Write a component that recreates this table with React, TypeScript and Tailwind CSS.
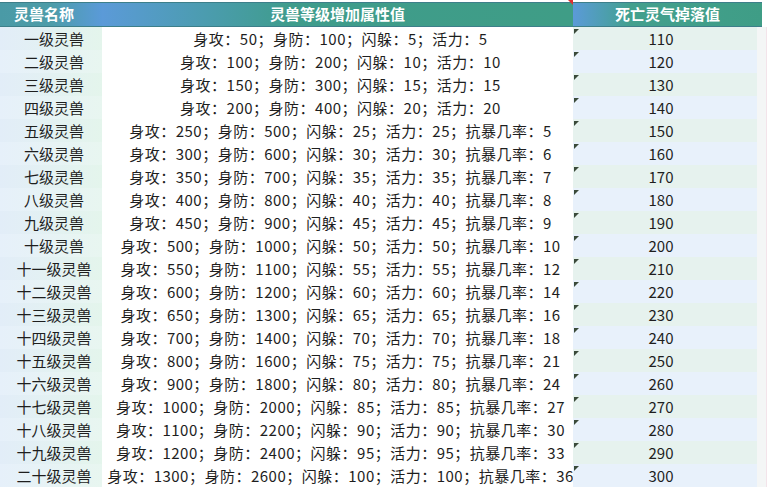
const rows = [
  ['一级灵兽', '身攻：50；身防：100；闪躲：5；活力：5', '110'],
  ['二级灵兽', '身攻：100；身防：200；闪躲：10；活力：10', '120'],
  ['三级灵兽', '身攻：150；身防：300；闪躲：15；活力：15', '130'],
  ['四级灵兽', '身攻：200；身防：400；闪躲：20；活力：20', '140'],
  ['五级灵兽', '身攻：250；身防：500；闪躲：25；活力：25；抗暴几率：5', '150'],
  ['六级灵兽', '身攻：300；身防：600；闪躲：30；活力：30；抗暴几率：6', '160'],
  ['七级灵兽', '身攻：350；身防：700；闪躲：35；活力：35；抗暴几率：7', '170'],
  ['八级灵兽', '身攻：400；身防：800；闪躲：40；活力：40；抗暴几率：8', '180'],
  ['九级灵兽', '身攻：450；身防：900；闪躲：45；活力：45；抗暴几率：9', '190'],
  ['十级灵兽', '身攻：500；身防：1000；闪躲：50；活力：50；抗暴几率：10', '200'],
  ['十一级灵兽', '身攻：550；身防：1100；闪躲：55；活力：55；抗暴几率：12', '210'],
  ['十二级灵兽', '身攻：600；身防：1200；闪躲：60；活力：60；抗暴几率：14', '220'],
  ['十三级灵兽', '身攻：650；身防：1300；闪躲：65；活力：65；抗暴几率：16', '230'],
  ['十四级灵兽', '身攻：700；身防：1400；闪躲：70；活力：70；抗暴几率：18', '240'],
  ['十五级灵兽', '身攻：800；身防：1600；闪躲：75；活力：75；抗暴几率：21', '250'],
  ['十六级灵兽', '身攻：900；身防：1800；闪躲：80；活力：80；抗暴几率：24', '260'],
  ['十七级灵兽', '身攻：1000；身防：2000；闪躲：85；活力：85；抗暴几率：27', '270'],
  ['十八级灵兽', '身攻：1100；身防：2200；闪躲：90；活力：90；抗暴几率：30', '280'],
  ['十九级灵兽', '身攻：1200；身防：2400；闪躲：95；活力：95；抗暴几率：33', '290'],
  ['二十级灵兽', '身攻：1300；身防：2600；闪躲：100；活力：100；抗暴几率：36', '300'],
];

export default function App() {
  return (
    <div
      className="w-[767px] h-[494px] bg-white overflow-hidden text-[#1e1e1e]"
      style={{ fontFamily: '"Noto Sans CJK SC", "Noto Sans", sans-serif' }}
    >
      {/* header */}
      <div className="mt-[2px] flex h-[25px] w-[762px] border-y border-[#3d7f8a] text-[15px] font-bold text-white">
        <div className="flex w-[102px] items-center bg-gradient-to-r from-[#4a9aa6] via-[#4d9ca8] to-[#5a9ad8] pl-[14px]">
          灵兽名称
        </div>
        <div className="relative flex w-[471px] items-center justify-center bg-gradient-to-r from-[#5b9ad8] via-[#3f9c8c] via-40% to-[#3f9d86]">
          灵兽等级增加属性值
          <span className="absolute right-0 top-[-3px] h-0 w-0 border-l-[5px] border-t-[5px] border-l-transparent border-t-[#e03030]" />
        </div>
        <div className="flex w-[189px] items-center justify-center bg-gradient-to-r from-[#5b9ad8] via-[#43a08e] via-30% to-[#3f9d86]">
          死亡灵气掉落值
        </div>
      </div>

      {/* body */}
      <div className="flex flex-col">
        {rows.map((r, i) => (
          <div key={i} className="flex h-[23px] items-center text-[15px] leading-none">
            <div
              className={`flex h-full w-[102px] items-center justify-center pl-[6px] bg-gradient-to-r ${
                i % 2 === 0 ? 'from-[#e2edf8] to-[#e4f5ec]' : 'from-[#e6f0fa] to-[#e8f6f0]'
              }`}
            >
              {r[0]}
            </div>
            <div className="flex h-full w-[471px] items-center justify-center whitespace-nowrap pl-[6px] tracking-[0.5px]">
              {r[1]}
            </div>
            <div
              className={`relative flex h-full w-[184px] items-center justify-center pr-[8px] ${
                i % 2 === 0 ? 'bg-[#e6f2ee]' : 'bg-[#e8f1fb]'
              }`}
            >
              <span className="absolute left-[1px] top-[2px] h-0 w-0 border-r-[5px] border-t-[5px] border-r-transparent border-t-[#3a4a3a]" />
              {r[2]}
            </div>
            <div className="h-full w-[10px] border-r border-[#f3e4ea] bg-[#f4f6f6]" />
          </div>
        ))}
      </div>
    </div>
  );
}
